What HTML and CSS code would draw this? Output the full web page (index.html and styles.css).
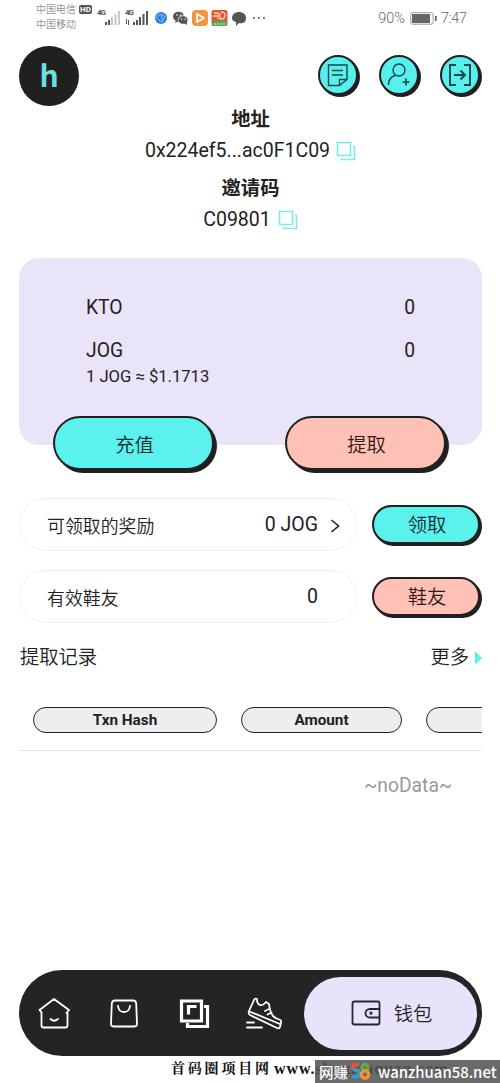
FILE: index.html
```html
<!DOCTYPE html>
<html lang="zh-CN">
<head>
<meta charset="utf-8">
<meta name="viewport" content="width=device-width">
<title>钱包</title>
<link rel="stylesheet" href="styles.css">
</head>
<body>
<div class="phone">
  <div class="status">
    <div class="carriers"><div>中国电信<span class="hd">HD</span></div><div>中国移动</div></div>
    <svg class="signals" width="170" height="24" viewBox="0 0 170 24">
      <g fill="#555" font-family="Roboto, sans-serif" font-size="8" font-weight="700">
        <text x="0" y="8" textLength="9">4G</text><text x="28" y="8" textLength="9">4G</text>
      </g>
      <path fill="#555" d="M8 15h2v3H8zM11 13h2v5h-2zM36 15h2v3h-2zM39 13h2v5h-2zM42 10h2v8h-2zM45.500 7h2v11h-2zM49 4h2v14h-2zM29 12h1v5h-1zM31 13h1v5h-1z"/>
      <path fill="#c8c8c8" d="M14 10h2v8h-2zM17.500 7h2v11h-2zM21 4h2v14h-2z"/>
      <circle cx="64" cy="11" r="6" fill="#2e7fe0"/><path d="M59 10q5-5 9 0l-4 5zM64 7l2 8" fill="none" stroke="#9cc6fa" stroke-width=".8"/>
      <ellipse cx="81.500" cy="9.500" rx="5.500" ry="4.800" fill="#555"/><ellipse cx="86" cy="13" rx="5" ry="4.300" fill="#555" stroke="#fff" stroke-width=".8"/><path d="M78 16l1-3 3 1zM87 16l3 2v-3z" fill="#555"/>
      <g fill="#fff"><circle cx="80" cy="8" r=".8"/><circle cx="83.500" cy="8" r=".8"/><circle cx="84.500" cy="12" r=".7"/><circle cx="88" cy="12" r=".7"/></g>
      <rect x="95" y="3" width="16" height="16" rx="4" fill="#f49542"/><path d="M100 7l7 4-7 4z" fill="none" stroke="#fff" stroke-width="1.800" stroke-linejoin="round"/>
      <rect x="114.500" y="3" width="16" height="16" rx="2" fill="#dc5735"/><path d="M117 6h4v6M116 9h5M124 5q5 0 4 4t-5 3v-6" fill="none" stroke="#ffd59b" stroke-width="1.300"/><path d="M115 15q8-3 15 0v4h-15z" fill="#54ac58"/><path d="M117 17h11" stroke="#c8efbe" stroke-dasharray="2 1"/>
      <path d="M135 11c0-8 14-8 14 0 0 5-5 6-7 5l-3 3v-4c-3-1-4-2-4-4z" fill="#555"/>
      <g fill="#555"><circle cx="157" cy="11" r="1"/><circle cx="162" cy="11" r="1"/><circle cx="167" cy="11" r="1"/></g>
    </svg>
    <span class="battery">90%</span>
    <svg width="27" height="13" viewBox="0 0 27 13"><rect x=".7" y=".7" width="22.500" height="11.500" rx="2" fill="#fff" stroke="#999"/><path d="M2 2h18v9H2z" fill="#666"/><path d="M25 4h1.700v5H25z" fill="#666"/></svg>
    <span class="time">7:47</span>
  </div>

  <header class="header">
    <div class="logo">h</div>
    <div class="tools">
      <button class="tool" aria-label="记录"><svg width="24" height="24" viewBox="0 0 24 24"><path d="M13.500 22.500H2.500V2h18.500v14.500zM13.500 22.500v-6H21M6 7.500h11M6 12h11"/></svg></button>
      <button class="tool" aria-label="邀请"><svg width="24" height="24" viewBox="0 0 24 24"><circle cx="12" cy="7" r="6"/><path d="M1.500 22c0-5 2.500-8.500 7-9.500M19 15.500v7M15.500 19h7" stroke-width="1.600"/></svg></button>
      <button class="tool" aria-label="退出"><svg width="24" height="24" viewBox="0 0 24 24"><path stroke-width="1.900" d="M8 2H2v20h6M16 2h6v20h-6M6 12h11M12.500 7.500L17 12l-4.500 4.500"/></svg></button>
    </div>
  </header>

  <section class="identity">
    <div class="label">地址</div>
    <div class="value">0x224ef5...ac0F1C09<svg class="copy" width="20" height="20" viewBox="0 0 20 20"><path d="M1.500 1.500h13v13h-13zM17 5.500h1.500v13h-13V17"/></svg></div>
    <div class="label">邀请码</div>
    <div class="value code">C09801<svg class="copy" width="20" height="20" viewBox="0 0 20 20"><path d="M1.500 1.500h13v13h-13zM17 5.500h1.500v13h-13V17"/></svg></div>
  </section>

  <section class="card">
    <div class="coin"><span>KTO</span><span>0</span></div>
    <div class="coin second"><span>JOG</span><span>0</span></div>
    <div class="rate">1 JOG ≈ $1.1713</div>
    <div class="actions"><button class="btn cyan">充值</button><button class="btn pink">提取</button></div>
  </section>

  <section class="rows">
    <div class="row"><div class="pill"><span class="name">可领取的奖励</span><span>0 JOG</span><svg class="chevron" width="10" height="16" viewBox="0 0 10 16"><path d="M1.500 2l7 6-7 6"/></svg></div><button class="btn small cyan">领取</button></div>
    <div class="row"><div class="pill"><span class="name">有效鞋友</span><span class="count">0</span></div><button class="btn small pink">鞋友</button></div>
  </section>

  <div class="records"><span>提取记录</span><span class="more">更多<i class="triangle"></i></span></div>
  <section class="table">
    <div class="heads"><div class="head hash">Txn Hash</div><div class="head amount">Amount</div><div class="head rest"></div></div>
    <div class="empty">~noData~</div>
  </section>

  <nav class="nav">
    <div class="links">
      <svg width="34" height="34" viewBox="0 0 34 34"><path d="M4.500 16v13.500q0 2 2 2h22q2 0 2-2V16M4.500 16.500L2.500 14 17 3l15 11-2.500 3M13.500 23q3.500 3.500 7.500 0"/></svg>
      <svg width="34" height="34" viewBox="0 0 34 34"><path d="M8 4.500h18q3 0 3.200 3L30 28q0 2.500-3 2.500H7q-3 0-3-2.500L4.800 7.500Q5 4.500 8 4.500zM11 10c1 8 11 8 12 0"/></svg>
      <svg width="34" height="34" viewBox="0 0 34 34"><path stroke-width="3.200" stroke-linecap="butt" stroke-linejoin="miter" d="M4.500 5h20v20h-20zM27 10.500h3.500v20h-20V27M11.500 18.500v-8h8"/></svg>
      <svg class="shoe" width="36" height="34" viewBox="0 0 36 34"><path d="M3 15L8 4q1-2 3-1 0 5 3 6 3 1 6-3l3 2q1 8 4 12 2 2 5 3 4 1 3 4l-1 4q-1 2-3 1L4 19q-2-1-1-4zM3.500 15.500L34 28M19 15l4-2M21.500 18.500l4-2M1 26.500h7M1 31.500h15"/></svg>
    </div>
    <div class="wallet"><svg width="32" height="28" viewBox="0 0 32 28"><path d="M4.500 2.500h23q2 0 2 2v19q0 2-2 2h-23q-2 0-2-2v-19q0-2 2-2zM29.500 10H20c-6 0-6 8.500 0 8.500h9.500"/><circle cx="21" cy="14.200" r=".7"/></svg><span>钱包</span></div>
  </nav>

  <div class="mark"><span class="cn">首码圈项目网</span><span class="site">www.shoumaquan.com</span></div>
  <div class="banner"><span>网赚</span><svg width="20" height="17" viewBox="0 0 20 17"><g fill="none" stroke-width="3.400"><path stroke="#e4573d" d="M8 2H2v5"/><path stroke="#379bd1" d="M2 7h3c4 0 4 7 0 7H1"/><circle cx="14" cy="4.500" r="3" stroke="#65a94a"/><circle cx="14" cy="11.500" r="3.700" stroke="#ed923b"/></g></svg><span class="domain">wanzhuan58.net</span></div>
</div>
</body>
</html>
```

FILE: styles.css
```css
* { box-sizing: border-box; }
body { margin: 0; background: #fff; color: #222; font-family: Roboto, "Noto Sans CJK SC", sans-serif; }
svg { flex: none; fill: none; }
button { margin: 0; padding: 0; font: inherit; color: inherit; }
.phone { position: relative; width: 500px; height: 1083px; overflow: hidden; display: flex; flex-direction: column; background: #fff; }

.status { height: 36px; flex: none; display: flex; align-items: center; padding: 0 33px 0 36px; color: #666; }
.carriers { width: 61px; font-size: 10px; line-height: 15px; font-weight: 300; padding-bottom: 2px; white-space: nowrap; }
.hd { display: inline-block; margin-left: 3px; padding: 0 1px; border-radius: 2px; background: #555; color: #fff; font-size: 8px; line-height: 9px; font-weight: 700; vertical-align: 1px; }
.signals { margin-top: 1px; }
.battery { margin-left: auto; margin-right: 5px; font-size: 14.5px; font-weight: 300; }
.time { width: 26px; margin-left: 4px; font-size: 14.5px; font-weight: 300; letter-spacing: -.4px; }

.header { height: 70px; flex: none; padding: 10px 20px 0 19px; display: flex; justify-content: space-between; }
.logo { width: 60px; height: 60px; border-radius: 50%; background: #202020; color: #66e2df; display: flex; align-items: center; justify-content: center; padding-bottom: 3px; font: 700 30px/57px "Noto Sans CJK SC", sans-serif; }
.tools { display: flex; gap: 21px; padding-top: 9px; }
.tool { width: 40px; height: 40px; border: 2px solid #202020; border-radius: 50%; background: #57f0ed; box-shadow: 2px 2px 0 #202020; display: flex; align-items: center; justify-content: center; }
.tool svg { stroke: #14494c; stroke-width: 1.4; }

.identity { height: 152px; flex: none; text-align: center; padding: 1px 0 0 1px; }
.label { height: 26px; font-size: 19.3px; line-height: 26px; font-weight: 700; }
.value { height: 44px; display: flex; align-items: center; justify-content: center; gap: 6px; font-size: 19.5px; line-height: 36px; padding-bottom: 8px; }
.value + .label { margin-top: -1px; }
.code { gap: 7px; }
.copy { stroke: #7ceae6; stroke-width: 1.6; }

.card { width: 463px; height: 187px; flex: none; margin-left: 19px; border-radius: 20px; background: #e9e4f8; padding: 36px 67px 0; }
.coin { height: 28px; display: flex; justify-content: space-between; font-size: 19.3px; line-height: 28px; }
.second { margin-top: 15px; }
.rate { font-size: 16.6px; line-height: 24px; }
.actions { display: flex; gap: 71px; margin: 27px 0 0 -33px; }
.btn { width: 161px; height: 54px; flex: none; border: 2.5px solid #202020; border-radius: 30px; box-shadow: 3px 3px 0 #202020; font-size: 19.3px; font-weight: 350; line-height: 28px; display: flex; align-items: center; justify-content: center; padding-top: 6px; padding-left: 2px; }
.cyan { background: #5bf1ed; color: #102c30; }
.pink { background: #ffc0b5; color: #301b19; }

.rows { flex: none; padding: 53px 0 0 19px; display: flex; flex-direction: column; gap: 19px; }
.row { display: flex; align-items: center; gap: 15px; }
.pill { width: 338px; height: 53px; display: flex; align-items: center; border: 1.5px solid #efefef; border-radius: 27px; padding: 0 16px 0 27px; font-size: 19.5px; }
.name { margin-right: auto; font-size: 17.9px; font-weight: 350; }
.chevron { margin-left: 12px; margin-top: 3px; stroke: #222; stroke-width: 1.6; }
.count { margin-right: 22px; }
.small { width: 108px; height: 39px; box-shadow: 2px 2px 0 #202020; padding-top: 2px; }

.records { height: 30px; flex: none; margin: 20px 18px 0 20px; display: flex; justify-content: space-between; align-items: center; font-size: 19.3px; font-weight: 350; line-height: 30px; }
.more { display: flex; align-items: center; gap: 6px; }
.triangle { border-left: 7px solid #5bf1ed; border-top: 7px solid transparent; border-bottom: 7px solid transparent; }
.table { width: 463px; margin-left: 19px; margin-top: 34px; overflow: hidden; flex: none; }
.heads { display: flex; gap: 24px; padding: 0 0 17px 14px; border-bottom: 1px solid #e8e8e8; }
.head { height: 26px; flex: none; border: 1.5px solid #222; border-radius: 13px; background: #eee; display: flex; align-items: center; justify-content: center; font-size: 15.3px; font-weight: 700; }
.hash { width: 184px; }
.amount { width: 161px; }
.rest { width: 160px; }
.empty { padding: 21px 30px 0 0; text-align: right; font-size: 19.3px; line-height: 28px; color: #999; }

.nav { width: 463px; height: 86px; flex: none; margin: auto 0 27px 19px; border-radius: 43px; background: #242424; display: flex; align-items: center; justify-content: space-between; padding: 0 5px 0 18px; }
.links { display: flex; gap: 36px; }
.links svg { stroke: #fff; stroke-width: 1.8; stroke-linecap: round; stroke-linejoin: round; }
.shoe { margin-left: -1px; }
.wallet { width: 173px; height: 73px; border-radius: 37px; background: #e8e2fa; display: flex; align-items: center; justify-content: center; gap: 12px; font-size: 19.3px; font-weight: 350; padding-left: 1px; }
.wallet svg { stroke: #28243a; stroke-width: 1.8; }

/* site marks overlaid on the bottom of the screen */
.mark { position: absolute; left: 171px; top: 1059px; display: flex; align-items: center; height: 20px; color: #111; white-space: nowrap; font: 700 16px/20px "Liberation Serif", "Noto Serif CJK SC", "Noto Sans CJK SC", serif; }
.cn { width: 103px; font-size: 14px; letter-spacing: 2.8px; }
.site { letter-spacing: .9px; }
.banner { position: absolute; left: 315px; top: 1060px; width: 185px; height: 23px; display: flex; align-items: center; padding-left: 4px; background: rgba(85, 85, 85, .88); color: #fff; white-space: nowrap; font: 500 14.5px/23px "Noto Sans CJK SC", sans-serif; }
.banner svg { margin: 0 7px 0 3px; }
.domain { font-size: 14.9px; }
```
